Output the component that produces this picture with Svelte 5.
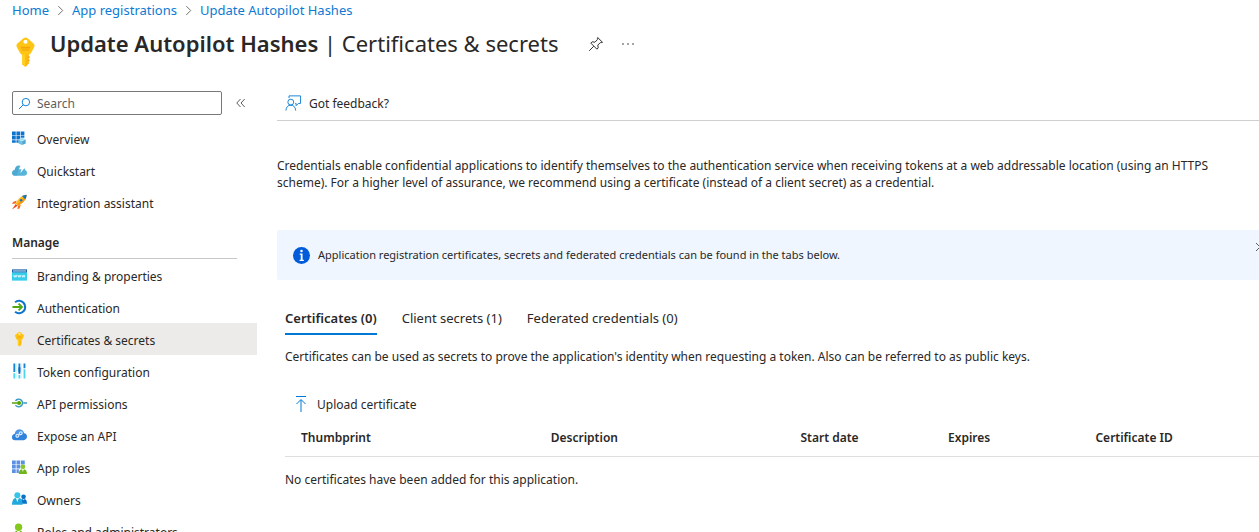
<script>
  let query = $state('');
  let activeTab = $state(0);

  const crumbs = ['Home', 'App registrations', 'Update Autopilot Hashes'];
  const general = [
    { label: 'Overview', icon: 'overview' },
    { label: 'Quickstart', icon: 'quickstart' },
    { label: 'Integration assistant', icon: 'rocket' }
  ];
  const manage = [
    { label: 'Branding & properties', icon: 'branding' },
    { label: 'Authentication', icon: 'auth' },
    { label: 'Certificates & secrets', icon: 'key', current: true },
    { label: 'Token configuration', icon: 'token' },
    { label: 'API permissions', icon: 'permissions' },
    { label: 'Expose an API', icon: 'cloud' },
    { label: 'App roles', icon: 'roles' },
    { label: 'Owners', icon: 'owners' },
    { label: 'Roles and administrators', icon: 'admin' }
  ];
  const tabs = ['Certificates (0)', 'Client secrets (1)', 'Federated credentials (0)'];
  const columns = ['Thumbprint', 'Description', 'Start date', 'Expires', 'Certificate ID'];
</script>

{#snippet keyShape()}
  <path fill="#fdb913" d="M6.300 8.600h3.500V14L8.400 15.700h-.9L6.300 14.500z" />
  <path fill="#ffd21a" d="M6.300 8.600h1.500v6.900L6.300 14.500z" />
  <path fill="#fec514" fill-rule="evenodd" d="M6.900.7Q8-.1 9.100.7l3.200 2.800q.9.800.3 1.900L11 8.400q-.5 1-1.500 1h-3q-1 0-1.500-1L3.400 5.400q-.6-1.100.3-1.900zM8 1.400a1.100 1.100 0 1 0 0 2.200 1.100 1.100 0 0 0 0-2.200z" />
  <path fill="#f2a60c" d="M5.500 5.200h5v.9h-5zM6 6.700h4v.6H6zM9.400 10.300h.8v.9h-.8zM9.400 12h.8v.9h-.8z" />
{/snippet}

{#snippet icon(name)}
  <svg class="icon" viewBox="0 0 16 16" aria-hidden="true">
    {#if name === 'overview'}
      <path fill="#0c74cc" d="M0 1h4v4H0zM4.700 1h4v4h-4zM9.400 1h3.800v4H9.400zM0 5.700h4v4H0zM4.700 5.700h4v4h-4zM9.400 5.700h3.800v2H9.400zM0 10.400h4V13H0zM4.700 10.400h2.500V13H4.700z" />
      <path fill="#a5def2" d="m10.800 7.800 3.800 1.600-3.800 1.800L7 9.400z" />
      <path fill="#6bc0e0" d="m7 9.600 3.600 1.800v4L7 13.800z" />
      <path fill="#4ba8d2" d="m14.600 9.600-3.800 1.800v4l3.800-1.600z" />
    {:else if name === 'quickstart'}
      <path fill="#59b4d9" d="M3.200 14A3 3 0 0 1 0 11c0-1.700 1.200-3 2.800-3.100C3.200 5.200 5 3.200 7.300 3.200c1.700 0 3 .8 3.800 2.300 2.200 0 3 1.400 3.100 2.800 1.100.3 1.800 1.300 1.800 2.700A2.800 2.800 0 0 1 13.200 14z" />
      <path fill="#fff" d="m10 1.500 3 .2-1.500 3.800h2.100L8.800 11.500l1.300-4.200H7.400z" />
      <path fill="#3999c6" d="M3.200 14A3 3 0 0 1 0 11c0-1.700 1.200-3 2.800-3.100C3.200 5.200 5 3.200 7 3.200L5.500 14z" opacity=".4" />
    {:else if name === 'rocket'}
      <path fill="#f37021" d="M5 6.500 1 8l-.8 2.200L4 9.600zM9.400 11 8 15l-2.200.8.6-3.800z" />
      <path fill="#e8481c" d="M4 10 0 15.900 6 12z" />
      <path fill="#ffb91b" d="M15.600.3C11 .6 7.500 3 4 9.500L6.500 12c6-3.500 8.800-7 9.100-11.700z" />
      <path fill="#f59a12" d="M15.600.3 5 11l1.500 1c6-3.500 8.800-7 9.100-11.700z" />
      <path fill="#0c74cc" d="M15.600.3c-1.900.1-3.400.6-4.900 1.400l3.600 3.600c.8-1.500 1.200-3.100 1.300-5z" />
      <circle cx="9.700" cy="6.200" r="1.300" fill="#0c74cc" />
    {:else if name === 'branding'}
      <path fill="#35cdea" d="M0 5h16v9H0z" />
      <path fill="#1564a8" d="M0 2h16v3.200H0z" />
      <path fill="#d6edf8" d="M1 3.200h14v1H1z" />
      <path fill="none" stroke="#e9fbff" stroke-width=".9" d="m1.800 8 .8 2.400.8-2 .8 2L5 8m1.200 0 .8 2.400.8-2 .8 2L9.400 8m1.200 0 .8 2.400.8-2 .8 2 .8-2.400" />
    {:else if name === 'auth'}
      <path fill="none" stroke="#0c74cc" stroke-width="2.200" d="M3.300 2.900A6.600 6.600 0 1 1 3.300 13.100" />
      <path fill="none" stroke="#50a80f" stroke-width="1.900" d="M.5 8H10M7 4.300 10.700 8 7 11.700" />
    {:else if name === 'key'}
      {@render keyShape()}
    {:else if name === 'token'}
      <path fill="#1484d7" d="M1.500 0h2v9h-2zM6.900 0h2v9h-2zM12.300 0h2v5h-2z" />
      <path fill="#4fd4f0" d="M1.500 10.300h2V16h-2zM12.300 6.200h2V16h-2z" />
      <path fill="#0b62b8" d="M6.900 4h2v7h-2z" />
      <path fill="#4fd4f0" d="M6.900 12.300h2V16h-2z" />
      <path fill="#83dff3" d="M4.300 0h.7v16h-.7zM9.700 0h.7v16h-.7z" opacity=".45" />
    {:else if name === 'permissions'}
      <path fill="none" stroke="#3999c6" stroke-width="1.500" d="M3.700 5.700a4.100 4.100 0 1 1 0 4.600M12 8h4" />
      <path fill="#57a300" d="M0 7.200h5.500v1.600H0z" />
      <circle cx="7.500" cy="8" r="2.200" fill="#57a300" />
    {:else if name === 'cloud'}
      <path fill="#2f83dd" d="M3.200 13.500A3.200 3.200 0 0 1 0 10.200C0 8.400 1.200 7.200 2.800 7 3.200 4.200 5.200 2.200 8 2.200c2.600 0 4.300 1.500 4.900 4 1.900.2 3.100 1.700 3.100 3.500 0 2.200-1.500 3.800-3.600 3.800z" />
      <path fill="#62a5ef" d="M8 2.200c2.600 0 4.300 1.500 4.900 4L3 7C3.300 4.200 5.200 2.200 8 2.200z" opacity=".6" />
      <g fill="none" stroke="#d7e9fc" stroke-width="1.300"><circle cx="5.700" cy="8.800" r="1.500" /><circle cx="9.300" cy="6.200" r="1.500" /></g>
      <path stroke="#d7e9fc" stroke-width="1.200" d="m7 8 1.200-1" />
    {:else if name === 'roles'}
      <path fill="#5c91e2" d="M0 1h4v4H0zM4.800 1h4v4h-4zM9.600 1h4v4h-4zM0 5.700h4v4H0zM4.800 5.700h4v4h-4zM0 10.400h4v4H0zM4.800 10.400h2.500v4H4.800zM9.600 5.700h4v1h-4z" />
      <circle cx="11.600" cy="7.800" r="2.500" fill="#86ca2a" />
      <path fill="#71b51d" d="M7.200 15.500q.3-4.900 3-5.200l1.400 1.400 1.400-1.400q2.700.3 3 5.200z" />
      <path fill="#d8f0b8" d="m10.500 10.400 1.100 3 1.100-3-1.100.6z" />
    {:else if name === 'owners'}
      <circle cx="12.300" cy="5.700" r="2.500" fill="#0c70c8" />
      <path fill="#0c70c8" d="M8.500 13q.2-4.700 2.600-5l1.200 1.200L13.500 8q2.300.3 2.500 5z" />
      <circle cx="5.700" cy="4.100" r="3.200" fill="#36c5e8" />
      <path fill="#22a9dc" d="M0 14q.3-6.600 3.800-7l1.900 2 1.900-2q3.500.4 3.800 7z" />
      <path fill="#d5f5fb" d="m4.300 7.200 1.400 4.300 1.400-4.300-1.400.8z" />
    {:else if name === 'admin'}
      <circle cx="7" cy="4" r="3.900" fill="#86c91e" />
      <path fill="#6eae17" d="M1 16q.3-7.600 4-8l2 2 2-2q3.700.4 4 8z" />
    {/if}
  </svg>
{/snippet}

{#snippet navList(items)}
  <ul>
    {#each items as item}
      <li>
        <a href="#top" class="nav-item" class:current={item.current} aria-current={item.current ? 'page' : undefined}>
          {@render icon(item.icon)}
          <span>{item.label}</span>
        </a>
      </li>
    {/each}
  </ul>
{/snippet}

<div class="page">
  <nav class="crumbs" aria-label="Breadcrumb">
    {#each crumbs as crumb, i}
      {#if i > 0}
        <svg class="chevron" viewBox="0 0 8 12" aria-hidden="true"><path d="m1.500 1 5 5-5 5" /></svg>
      {/if}
      <a href="#top">{crumb}</a>
    {/each}
  </nav>

  <header>
    <svg class="title-key" viewBox="3 0 10 16" aria-hidden="true">{@render keyShape()}</svg>
    <h1><strong>Update Autopilot Hashes</strong> | Certificates &amp; secrets</h1>
    <button class="plain pin" aria-label="Pin">
      <svg viewBox="0 0 16 16"><path d="m9.700 1.500 4.800 4.800-1.300.4-.9-.1-2.500 2.500.4 2.800-1.300 1.300-6.100-6.100L4.100 5.800l2.800.4 2.500-2.500-.1-.9zM5.800 10.200 1.200 14.800" /></svg>
    </button>
    <button class="plain more" aria-label="More">
      <svg viewBox="0 0 12 4"><circle cx="1" cy="2" r=".8" /><circle cx="6" cy="2" r=".8" /><circle cx="11" cy="2" r=".8" /></svg>
    </button>
  </header>

  <div class="body">
    <aside>
      <div class="search-row">
        <label class="search">
          <svg viewBox="0 0 14 14" aria-hidden="true"><circle cx="8.500" cy="5.500" r="4" /><path d="M5.600 8.400 1 13" /></svg>
          <input type="text" placeholder="Search" aria-label="Search" bind:value={query} />
        </label>
        <button class="plain collapse" aria-label="Collapse menu">
          <svg viewBox="0 0 10 10"><path d="M4.500 1 .8 5l3.700 4M8.700 1 5 5l3.700 4" /></svg>
        </button>
      </div>
      {@render navList(general)}
      <h2>Manage</h2>
      {@render navList(manage)}
    </aside>

    <main>
      <div class="toolbar">
        <button class="plain command">
          <svg viewBox="0 0 18 18" aria-hidden="true"><path d="M4.500 3.500V1h13v8.500h-2.500l-2.500 2.500V9.500h-1" /><circle cx="6.500" cy="8" r="3.300" /><path d="M1 17.500q.5-6 5.500-6t5.500 6" /></svg>
          <span>Got feedback?</span>
        </button>
      </div>

      <p class="intro">
        Credentials enable confidential applications to identify themselves to the authentication service when receiving tokens at a web addressable location (using an HTTPS scheme). For a higher level of assurance, we recommend using a certificate (instead of a client secret) as a credential.
      </p>

      <div class="banner" role="status">
        <svg class="info" viewBox="0 0 16 16" aria-hidden="true"><circle cx="8" cy="8" r="8" fill="#015cda" /><circle cx="8" cy="3.800" r="1.200" fill="#fff" /><path fill="#fff" d="M6.300 6.200H9v5.900h1.200v1.100H6.200v-1.100h1.100V7.300h-1z" /></svg>
        <span>Application registration certificates, secrets and federated credentials can be found in the tabs below.</span>
        <button class="plain close" aria-label="Dismiss">
          <svg viewBox="0 0 10 10"><path d="m1 1 8 8M9 1 1 9" /></svg>
        </button>
      </div>

      <section>
        <div class="tabs" role="tablist">
          {#each tabs as tab, i}
            <button class="tab" class:active={activeTab === i} role="tab" aria-selected={activeTab === i} onclick={() => (activeTab = i)}>{tab}</button>
          {/each}
        </div>

        <p class="hint">Certificates can be used as secrets to prove the application's identity when requesting a token. Also can be referred to as public keys.</p>

        <button class="plain command upload">
          <svg viewBox="0 0 16 18" aria-hidden="true"><path d="M3 1.500h10" /><path d="M8 17V5M3.500 9 8 4.500 12.500 9" /></svg>
          <span>Upload certificate</span>
        </button>

        <table>
          <thead>
            <tr>
              {#each columns as column}<th scope="col">{column}</th>{/each}
            </tr>
          </thead>
          <tbody>
            <tr><td colspan="5">No certificates have been added for this application.</td></tr>
          </tbody>
        </table>
      </section>
    </main>
  </div>
</div>

<style>
  :global(body) {
    margin: 0;
    background: #fff;
  }
  .page {
    height: 100vh;
    overflow: hidden;
    display: flex;
    flex-direction: column;
    color: #292827;
    font-family: 'Segoe UI', 'Noto Sans', 'Open Sans', sans-serif;
    font-size: 12px;
    line-height: 18px;
  }
  .page :is(button, input) {
    font: inherit;
    color: inherit;
  }
  a {
    color: inherit;
    text-decoration: none;
  }
  svg {
    flex: none;
  }
  .page .plain {
    display: flex;
    align-items: center;
    padding: 0;
    border: 0;
    background: none;
  }
  .plain svg,
  .search svg,
  .chevron {
    fill: none;
    stroke: #605e5c;
    stroke-width: 1;
  }
  .crumbs {
    display: flex;
    align-items: center;
    gap: 8px;
    padding: 1px 12px;
    color: #0d7ad3;
    font-size: 13px;
    white-space: nowrap;
  }
  .chevron {
    width: 7px;
    height: 11px;
  }
  header {
    display: flex;
    align-items: center;
    height: 48px;
    padding-left: 16px;
  }
  .title-key {
    width: 19px;
    height: 30px;
    margin-top: 16px;
  }
  h1 {
    margin: 0 0 2px 15px;
    font-size: 22px;
    line-height: 32px;
    font-weight: 400;
    white-space: nowrap;
  }
  h1 strong {
    font-weight: 600;
  }
  .pin {
    margin-left: 30px;
  }
  .pin svg {
    width: 16px;
    height: 16px;
    stroke: #323130;
  }
  .more {
    margin-left: 18px;
  }
  .more svg {
    width: 12px;
    height: 4px;
    fill: #323130;
    stroke: none;
  }
  .body {
    flex: 1;
    display: flex;
    min-height: 0;
    padding-top: 23px;
  }
  aside {
    flex: none;
    width: 257px;
    overflow: hidden;
  }
  .search-row {
    display: flex;
    align-items: center;
    gap: 14px;
    padding: 0 0 7px 12px;
  }
  .search {
    box-sizing: border-box;
    display: flex;
    align-items: center;
    gap: 6px;
    width: 210px;
    height: 24px;
    padding: 0 5px;
    border: 1px solid #7a7876;
    border-radius: 2px;
  }
  .search svg {
    width: 13px;
    height: 13px;
    stroke: #0078d4;
  }
  .search input {
    flex: 1;
    min-width: 0;
    padding: 2px 0 0;
    border: 0;
    outline: 0;
    background: none;
  }
  .search input::placeholder {
    color: #605e5c;
    opacity: 1;
  }
  .collapse svg {
    width: 10px;
    height: 10px;
  }
  ul {
    margin: 0;
    padding: 0;
    list-style: none;
  }
  .nav-item {
    display: flex;
    align-items: center;
    gap: 10px;
    height: 32px;
    padding-left: 12px;
    white-space: nowrap;
  }
  .nav-item span {
    padding-top: 4px;
  }
  .nav-item.current {
    background: #edebe9;
  }
  .icon {
    width: 15px;
    height: 16px;
  }
  h2 {
    margin: 0 20px 0 12px;
    padding: 16px 0 6px;
    border-bottom: 1px solid #c8c6c4;
    font-size: 12px;
    line-height: 18px;
    font-weight: 600;
  }
  main {
    flex: 1;
    min-width: 0;
    padding-left: 20px;
  }
  .toolbar {
    display: flex;
    height: 29px;
    padding-left: 8px;
    border-bottom: 1px solid #d2d0ce;
  }
  .command {
    gap: 8px;
    height: 24px;
  }
  .command span {
    padding-top: 2px;
  }
  .command svg {
    width: 16px;
    height: 18px;
    stroke: #0078d4;
  }
  .intro {
    margin: 36px 24px 39px 0;
    line-height: 17px;
  }
  .banner {
    display: flex;
    align-items: center;
    gap: 8px;
    height: 50px;
    margin-right: -22px;
    padding: 0 16px;
    border-radius: 2px;
    background: #eff6ff;
    font-size: 11px;
  }
  .info {
    width: 17px;
    height: 17px;
  }
  .close {
    align-self: flex-start;
    margin: 12px 0 0 auto;
  }
  .close svg {
    width: 10px;
    height: 10px;
  }
  section {
    padding: 25px 0 0 8px;
  }
  .tabs {
    display: flex;
    gap: 25px;
  }
  .tab {
    height: 30px;
    padding: 0 0 2px;
    border: 0;
    border-bottom: 2px solid transparent;
    background: none;
    white-space: nowrap;
  }
  .page .tab {
    font-size: 13px;
  }
  .page .tab.active {
    border-color: #0078d4;
    font-weight: 600;
  }
  .hint {
    margin: 13px 0 26px;
  }
  .upload {
    margin-left: 8px;
  }
  table {
    width: 100%;
    margin-top: 4px;
    table-layout: fixed;
    border-collapse: collapse;
  }
  th {
    height: 36px;
    padding: 0 0 0 16px;
    border-bottom: 1px solid #e1dfdd;
    font-weight: 600;
    text-align: left;
  }
  th:nth-child(-n + 2) {
    width: 24%;
  }
  th:nth-child(3),
  th:nth-child(4) {
    width: 13.5%;
  }
  td {
    height: 46px;
    padding: 0;
  }
</style>
